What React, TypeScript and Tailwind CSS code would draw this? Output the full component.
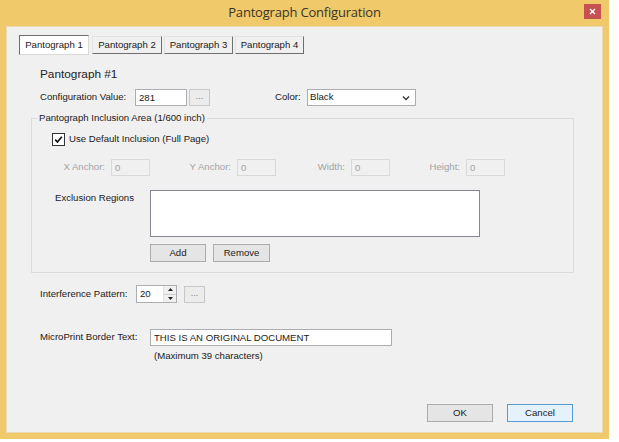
import { FC } from "react";

const tabs = ["Pantograph 1", "Pantograph 2", "Pantograph 3", "Pantograph 4"];

const DotsButton: FC = () => (
  <button className="w-[21px] h-[17px] border border-[#c7c7c7] bg-[#ececec] text-[9px] text-[#7a7a7a] leading-none flex items-center justify-center pb-[2px]">
    ...
  </button>
);

const DisabledField: FC<{ label: string; labelW: string }> = ({ label, labelW }) => (
  <div className="flex items-center">
    <span className={`${labelW} text-right pr-[6px] text-[#a3a3a3]`}>{label}</span>
    <div className="w-[39px] h-[17px] border border-[#d9d9d9] bg-[#f0f0f0] text-[#a3a3a3] pl-[3px] leading-[15px]">
      0
    </div>
  </div>
);

const App: FC = () => {
  return (
    <div className="w-[619px] h-[442px] bg-white font-['Liberation_Sans',Arial,sans-serif] text-[9.6px] text-[#1a1a1a]">
      <div className="w-[609px] h-[439px] bg-[#f0c96b] flex flex-col px-[6px] pb-[6px]">
        {/* title bar */}
        <div className="h-[26px] relative flex items-center justify-center">
          <span className="font-['Open_Sans',sans-serif] text-[13px] text-[#3a3426] tracking-[-0.2px]">
            Pantograph Configuration
          </span>
          <div className="absolute right-[2px] top-[4px] w-[17px] h-[15px] bg-[#c75050] flex items-center justify-center">
            <svg width="7" height="7" viewBox="0 0 7 7">
              <path d="M1 1 L6 6 M6 1 L1 6" stroke="white" strokeWidth="1.4" />
            </svg>
          </div>
        </div>

        {/* client */}
        <div className="flex-1 bg-[#f0f0f0] border border-[#e9dcb5] flex flex-col">
          {/* tabs */}
          <div className="flex items-center mt-[8px] ml-[12px] gap-[2px]">
            {tabs.map((t, i) =>
              i === 0 ? (
                <div
                  key={t}
                  className="w-[70px] h-[20px] mr-[1px] bg-white border border-[#6e6e6e] border-r-[#d8d8d8] border-b-[#d8d8d8] flex items-center justify-center"
                >
                  {t}
                </div>
              ) : (
                <div
                  key={t}
                  className={`${i === 1 ? "w-[70px]" : "w-[69px]"} h-[18px] bg-[#f0f0f0] border border-[#e3e3e3] border-r-[#6e6e6e] border-b-[#6e6e6e] flex items-center justify-center`}
                >
                  {t}
                </div>
              )
            )}
          </div>

          <div className="ml-[33px] mt-[12px] text-[11.8px] leading-[14px] text-[#222]">Pantograph #1</div>

          {/* config value row */}
          <div className="flex items-center mt-[8px] ml-[33px] h-[17px]">
            <span className="w-[95px]">Configuration Value:</span>
            <div className="w-[52px] h-[17px] bg-white border border-[#abadb3] pl-[3px] leading-[15px]">281</div>
            <div className="ml-[2px]">
              <DotsButton />
            </div>
            <span className="ml-[65px] w-[32px]">Color:</span>
            <div className="w-[109px] h-[17px] bg-white border border-[#abadb3] flex items-center justify-between pl-[2px] pr-[5px]">
              <span>Black</span>
              <svg width="8" height="6" viewBox="0 0 8 6">
                <path d="M1 1.5 L4 4.5 L7 1.5" stroke="#333" strokeWidth="1.3" fill="none" />
              </svg>
            </div>
          </div>

          {/* inclusion area group */}
          <fieldset className="ml-[24px] mr-[28px] mt-[6px] h-[161px] border border-[#dcdcdc]">
            <legend className="ml-[5px] px-[2px] leading-[12px]">Pantograph Inclusion Area (1/600 inch)</legend>
            <div className="flex items-center mt-[8px] ml-[20px] h-[14px]">
              <div className="w-[13px] h-[13px] bg-white border border-[#333] flex items-center justify-center">
                <svg width="9" height="9" viewBox="0 0 9 9">
                  <path d="M1.2 4.6 L3.5 7 L7.8 1.8" stroke="#111" strokeWidth="1.7" fill="none" />
                </svg>
              </div>
              <span className="ml-[4px]">Use Default Inclusion (Full Page)</span>
            </div>

            <div className="flex items-center mt-[13px] h-[17px]">
              <DisabledField label="X Anchor:" labelW="w-[79px]" />
              <DisabledField label="Y Anchor:" labelW="w-[87px]" />
              <DisabledField label="Width:" labelW="w-[75px]" />
              <DisabledField label="Height:" labelW="w-[76px]" />
            </div>

            <div className="flex mt-[14px]">
              <span className="w-[95px] ml-[23px] mt-[1px]">Exclusion Regions</span>
              <div className="flex flex-col">
                <div className="w-[330px] h-[47px] bg-white border border-[#828790]" />
                <div className="flex gap-[7px] mt-[7px]">
                  <button className="w-[56px] h-[18px] bg-[#e5e5e5] border border-[#acacac] leading-none">Add</button>
                  <button className="w-[57px] h-[18px] bg-[#e5e5e5] border border-[#acacac] leading-none">Remove</button>
                </div>
              </div>
            </div>
          </fieldset>

          {/* interference pattern */}
          <div className="flex items-center mt-[12px] ml-[33px] h-[18px]">
            <span className="w-[96px]">Interference Pattern:</span>
            <div className="w-[41px] h-[18px] bg-white border border-[#abadb3] flex">
              <span className="flex-1 pl-[3px] leading-[16px]">20</span>
              <div className="w-[13px] flex flex-col border-l border-[#e3e3e3] bg-[#f0f0f0]">
                <div className="flex-1 flex items-center justify-center border-b border-[#d0d0d0]">
                  <svg width="5" height="3" viewBox="0 0 5 3">
                    <path d="M0 3 L2.5 0 L5 3 Z" fill="#222" />
                  </svg>
                </div>
                <div className="flex-1 flex items-center justify-center">
                  <svg width="5" height="3" viewBox="0 0 5 3">
                    <path d="M0 0 L2.5 3 L5 0 Z" fill="#222" />
                  </svg>
                </div>
              </div>
            </div>
            <div className="ml-[7px]">
              <DotsButton />
            </div>
          </div>

          {/* microprint */}
          <div className="flex items-center mt-[26px] ml-[33px] h-[17px]">
            <span className="w-[110px]">MicroPrint Border Text:</span>
            <div className="w-[242px] h-[17px] bg-white border border-[#abadb3] pl-[3px] leading-[15px]">
              THIS IS AN ORIGINAL DOCUMENT
            </div>
          </div>
          <div className="ml-[147px] mt-[4px] leading-[11px]">(Maximum 39 characters)</div>

          {/* ok / cancel */}
          <div className="flex justify-end gap-[14px] mt-auto mb-[10px] mr-[29px]">
            <button className="w-[66px] h-[18px] bg-[#e5e5e5] border border-[#acacac] leading-none">OK</button>
            <button className="w-[66px] h-[18px] bg-[#e5f1fb] border border-[#5b9bd5] leading-none">Cancel</button>
          </div>
        </div>
      </div>
    </div>
  );
};

export default App;
